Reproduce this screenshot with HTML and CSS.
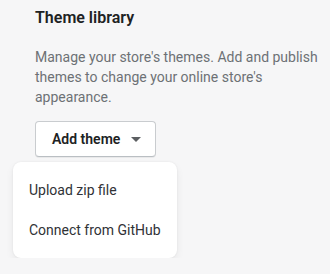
FILE: index.html
```html
<!DOCTYPE html>
<html lang="en">
<head>
    <meta charset="UTF-8">
    <meta name="viewport" content="width=device-width, initial-scale=1.0">
    <title>Theme library</title>
    <link rel="stylesheet" href="styles.css">
</head>
<body>
    <div class="section">
        <h2 class="title">Theme library</h2>
        <p class="description">Manage your store's themes. Add and publish themes to change your online store's appearance.</p>
        <div class="actions">
            <button class="add-button" type="button">
                Add theme
                <svg class="caret" width="10" height="5" viewBox="0 0 10 5"><path d="M0 0h10L5 5z" fill="#5c5f62"/></svg>
            </button>
            <div class="menu">
                <div class="menu-item">Upload zip file</div>
                <div class="menu-item">Connect from GitHub</div>
            </div>
        </div>
    </div>
</body>
</html>
```

FILE: styles.css
```css
body {
    margin: 0;
    background-color: #f6f6f7;
    font-family: Roboto, "Noto Sans", sans-serif;
    color: #202223;
}
.section {
    padding: 6px 8px 0 35px;
}
.title {
    margin: 0;
    font-size: 16px;
    font-weight: 600;
    line-height: 24px;
}
.description {
    margin: 17px 0 0;
    max-width: 287px;
    font-size: 14px;
    line-height: 20px;
    color: #6d7175;
}
.actions {
    display: flex;
    flex-direction: column;
    align-items: flex-start;
    margin-top: 14px;
}
.add-button {
    display: flex;
    align-items: center;
    gap: 11px;
    height: 36px;
    padding: 0 14px 0 16px;
    background: #ffffff;
    border: 1px solid #c9cccf;
    border-bottom-color: #babfc3;
    border-radius: 4px;
    box-shadow: 0 1px 0 rgba(0, 0, 0, 0.05);
    font-family: inherit;
    font-size: 14px;
    font-weight: 600;
    color: #202223;
    white-space: nowrap;
}
.menu {
    margin: 5px 0 0 -22px;
    width: 164px;
    padding: 8px 0;
    background: #ffffff;
    border-radius: 8px;
    box-shadow: 0 0 2px rgba(0, 0, 0, 0.08), 0 4px 8px rgba(0, 0, 0, 0.06);
}
.menu-item {
    padding: 0 16px;
    height: 40px;
    line-height: 40px;
    font-size: 14px;
    color: #303236;
}
```
